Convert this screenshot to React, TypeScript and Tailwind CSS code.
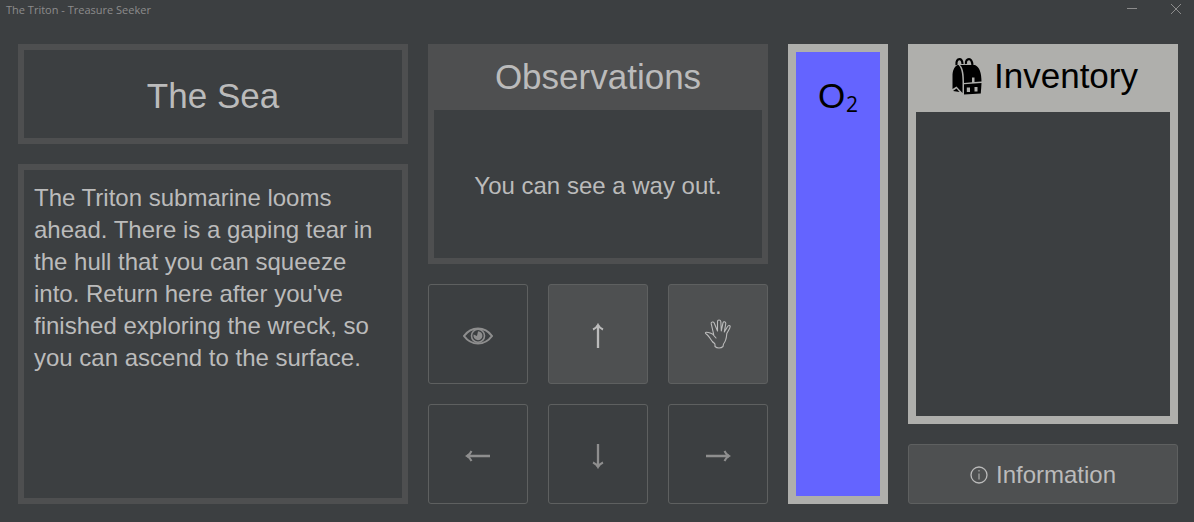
import type { ReactNode } from "react";

function Frame({ className, children }: { className?: string; children?: ReactNode }) {
  return (
    <section className={`border-6 border-[#4e4f50] px-[10px] text-[#bbbbbb] ${className ?? ""}`}>
      {children}
    </section>
  );
}

function PadButton({
  label,
  enabled,
  children,
}: {
  label: string;
  enabled?: boolean;
  children: ReactNode;
}) {
  const tone = enabled ? "bg-[#4e5051] text-[#bbbbbb]" : "text-[#8e8e8e]";
  return (
    <button
      type="button"
      aria-label={label}
      disabled={!enabled}
      className={`flex h-[100px] items-center justify-center rounded-[3px] border border-[#5e6060] pt-1 ${tone}`}
    >
      {children}
    </button>
  );
}

function EyeIcon() {
  return (
    <svg width="30" height="18" viewBox="0 0 30 18" fill="none" stroke="currentColor">
      <path d="M1 9C5 3.500 9.500 1.500 15 1.500S25 3.500 29 9C25 14.500 20.500 16.500 15 16.500S5 14.500 1 9Z" strokeWidth="2.100" />
      <circle cx="15" cy="8.800" r="6.500" strokeWidth="1.600" />
      <path d="M15 4.200A4.500 4.500 0 1 1 10.600 7.500L14 9Z" fill="currentColor" stroke="none" />
    </svg>
  );
}

function HandIcon() {
  return (
    <svg width="28" height="30" viewBox="0 0 28 30" fill="none" stroke="currentColor" strokeWidth="1.100" strokeLinejoin="round" strokeLinecap="round" className="mb-1">
      <path d="M12 19L8.500 15C6.500 14.300 4.300 13 2.200 13.200C1 13.400 1.300 14.500 2.200 15C4.500 16.500 6.500 20 8.300 22.500C9.700 24 11 24.200 11 25.500V27.500C13 29.500 17 29.500 19 27.500L19.500 25C22.500 21.500 22.500 17.500 22.800 14.500C24 12 26.400 9 26.200 7.200C25.800 6 24.200 6.300 23.600 7.500L20.300 13L21.800 4.500C21.800 2.500 19.500 2.100 19 3.800L17.300 12L16.800 2.500C16.500.500 13.500.500 13.500 2.500V12L10.200 4C9.400 2.200 6.900 3 7.200 4.700L9.700 15.500" />
    </svg>
  );
}

function ArrowIcon({ turn }: { turn: string }) {
  return (
    <svg width="26" height="26" viewBox="0 0 26 26" fill="none" stroke="currentColor" className={turn}>
      <path d="M13 25V2" strokeWidth="2.300" />
      <path d="M8 6.500Q11.500 5 13 2Q14.500 5 18 6.500" strokeWidth="2" />
    </svg>
  );
}

function BackpackIcon() {
  return (
    <svg width="30" height="37" viewBox="0 0 30 37" fill="none">
      <path d="M4.500 7C4 3 5.500 1.200 7.500 1.200S10.300 3 10.500 6M14 6C13.500 3 15 1.200 17 1.200S20 3 20.500 7" stroke="#000" strokeWidth="2.200" />
      <path d="M5.500 7C2 9 .500 13 .500 18V31L4.500 28.500L10.500 35V24C10.500 16 9.500 10 6.500 7Z" fill="#000" />
      <path d="M1 33L4.500 30.500L7.500 34Z" fill="#000" />
      <path d="M8 7H23C27.500 9 29.500 15 29.500 23.500L22.500 24V19.500H20V24.300L12 25C12 17 11.500 10 8 7Z" fill="#000" />
      <path d="M12 26.200L29.500 25L28.800 35.500L12 36.500Z" fill="#000" />
      <path d="M14.800 29.500H18V34H14.800ZM22.500 29H25.500V33.500H22.500Z" fill="#afafac" />
    </svg>
  );
}

export default function App() {
  return (
    <div className="flex min-h-screen flex-col bg-[#3c3f41] font-['Liberation_Sans',Arial,sans-serif]">
      <header className="flex h-5 items-center justify-between pr-3 pl-[6px] text-[#8c8c8c]">
        <h1 className="font-['Open_Sans',sans-serif] text-[11px] leading-5">The Triton - Treasure Seeker</h1>
        <div className="flex items-center gap-8">
          <button type="button" aria-label="Minimize" className="flex">
            <svg width="12" height="12" viewBox="0 0 12 12" stroke="currentColor">
              <path d="M1 4.500H11" />
            </svg>
          </button>
          <button type="button" aria-label="Close" className="flex">
            <svg width="12" height="12" viewBox="0 0 12 12" stroke="currentColor">
              <path d="M1 0L11 10M11 0L1 10" />
            </svg>
          </button>
        </div>
      </header>

      <main className="grid flex-1 grid-cols-[39fr_34fr_10fr_27fr] gap-5 pt-6 pr-4 pb-[18px] pl-[18px]">
        <div className="flex flex-col gap-5">
          <Frame className="flex h-[100px] items-center justify-center pt-1">
            <h2 className="text-[35px] leading-10">The Sea</h2>
          </Frame>
          <Frame className="flex-1 py-3">
            <p className="text-2xl">
              The Triton submarine looms ahead. There is a gaping tear in the hull that you can
              squeeze into. Return here after you've finished exploring the wreck, so you can
              ascend to the surface.
            </p>
          </Frame>
        </div>

        <div className="flex flex-col gap-5">
          <section className="flex flex-1 flex-col border-6 border-t-0 border-[#4e4f50] text-[#bbbbbb]">
            <h2 className="h-[66px] bg-[#4e4f50] text-center text-[35px] leading-[66px]">Observations</h2>
            <p className="flex flex-1 items-center justify-center pt-1 text-2xl">You can see a way out.</p>
          </section>
          <div className="grid grid-cols-3 gap-5">
            <PadButton label="Look"><EyeIcon /></PadButton>
            <PadButton label="Up" enabled><ArrowIcon turn="rotate-0" /></PadButton>
            <PadButton label="Take" enabled><HandIcon /></PadButton>
            <PadButton label="Left"><ArrowIcon turn="-rotate-90" /></PadButton>
            <PadButton label="Down"><ArrowIcon turn="rotate-180" /></PadButton>
            <PadButton label="Right"><ArrowIcon turn="rotate-90" /></PadButton>
          </div>
        </div>

        <section className="border-8 border-[#afafac] bg-[#6464ff] pt-6 text-black">
          <h2 className="flex items-end justify-center gap-px text-[35px] leading-10">
            O<span className="font-['Open_Sans',sans-serif] text-[21px] leading-6">2</span>
          </h2>
        </section>

        <div className="flex flex-col gap-5">
          <section className="flex flex-1 flex-col border-8 border-t-0 border-[#afafac]">
            <h2 className="flex h-[68px] items-center justify-center gap-3 bg-[#afafac] pb-1 pl-1 text-[35px] leading-10 text-black">
              <BackpackIcon />
              Inventory
            </h2>
          </section>
          <button
            type="button"
            className="flex h-[60px] items-center justify-center gap-2 rounded-[3px] border border-[#5e6060] bg-[#4e5051] pt-px text-2xl text-[#bbbbbb]"
          >
            <svg width="18" height="18" viewBox="0 0 18 18" fill="none" stroke="currentColor">
              <circle cx="9" cy="9" r="8" strokeWidth="1.300" />
              <path d="M9 7.500V13.500M9 4V5.500" />
            </svg>
            Information
          </button>
        </div>
      </main>
    </div>
  );
}
